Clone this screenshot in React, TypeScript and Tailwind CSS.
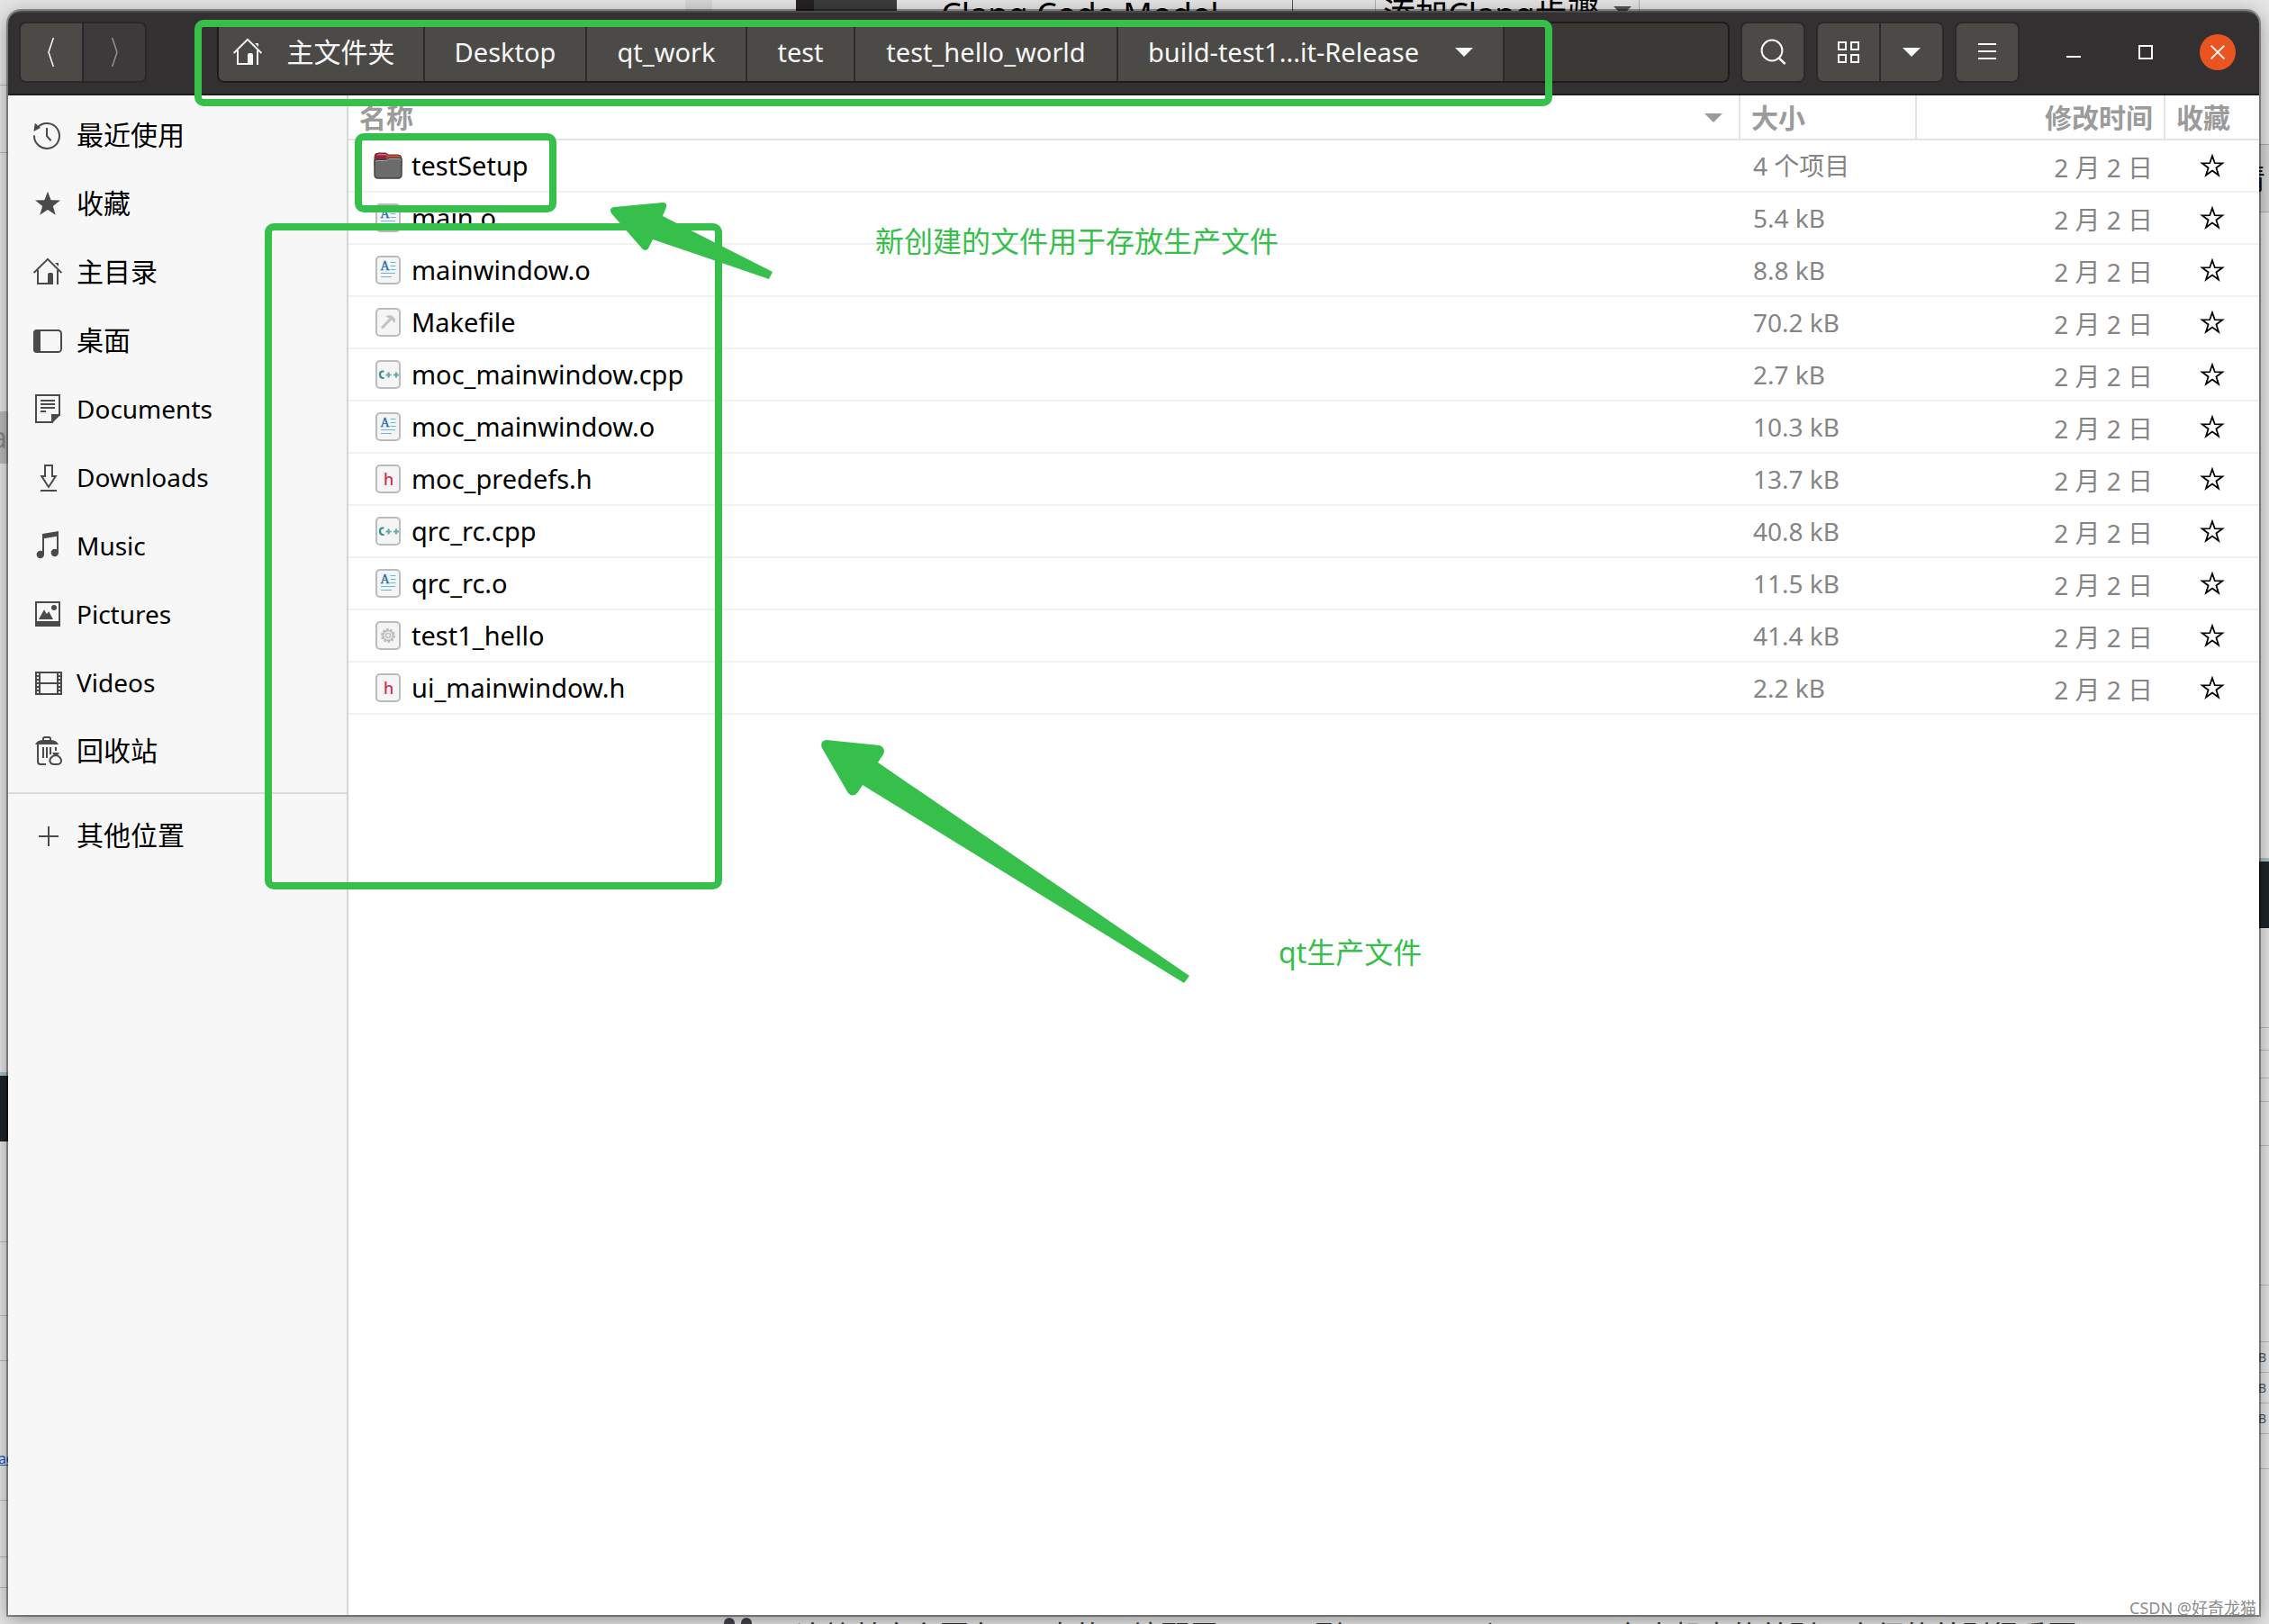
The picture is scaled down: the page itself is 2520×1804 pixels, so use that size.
import { ReactNode, useState } from 'react';

type FileKind = 'folder' | 'object' | 'make' | 'cpp' | 'header' | 'binary';

interface FileRow {
  name: string;
  kind: FileKind;
  size: string;
  modified: string;
}

const files: FileRow[] = [
  { name: 'testSetup', kind: 'folder', size: '4 个项目', modified: '2 月 2 日' },
  { name: 'main.o', kind: 'object', size: '5.4 kB', modified: '2 月 2 日' },
  { name: 'mainwindow.o', kind: 'object', size: '8.8 kB', modified: '2 月 2 日' },
  { name: 'Makefile', kind: 'make', size: '70.2 kB', modified: '2 月 2 日' },
  { name: 'moc_mainwindow.cpp', kind: 'cpp', size: '2.7 kB', modified: '2 月 2 日' },
  { name: 'moc_mainwindow.o', kind: 'object', size: '10.3 kB', modified: '2 月 2 日' },
  { name: 'moc_predefs.h', kind: 'header', size: '13.7 kB', modified: '2 月 2 日' },
  { name: 'qrc_rc.cpp', kind: 'cpp', size: '40.8 kB', modified: '2 月 2 日' },
  { name: 'qrc_rc.o', kind: 'object', size: '11.5 kB', modified: '2 月 2 日' },
  { name: 'test1_hello', kind: 'binary', size: '41.4 kB', modified: '2 月 2 日' },
  { name: 'ui_mainwindow.h', kind: 'header', size: '2.2 kB', modified: '2 月 2 日' },
];

/* 16px grid icons, drawn at 2x */
function Icon({ children }: { children: ReactNode }) {
  return (
    <svg viewBox="0 0 16 16" className="size-8 shrink-0" fill="none" stroke="currentColor" aria-hidden="true">
      {children}
    </svg>
  );
}

const HomeIcon = () => (
  <Icon>
    <path d="M.3 8.5 8 .9l7.7 7.6M2.5 7v7.5h6M13.5 7v8" />
    <path d="M8 15V9.5q0-1 1-1h1q1 0 1 1V15zM12 3h2v2z" fill="currentColor" stroke="none" />
  </Icon>
);

const places: { label: string; cjk?: boolean; icon: ReactNode }[] = [
  {
    label: '最近使用',
    cjk: true,
    icon: (
      <Icon>
        <path d="M.5 8.2A7 7 0 1 0 2.2 3.9" />
        <path d="M7.5 4v4.6l2.3 2.5" />
        <path d="M.9 1.4 4 4 .2 6z" fill="currentColor" stroke="none" />
      </Icon>
    ),
  },
  {
    label: '收藏',
    cjk: true,
    icon: (
      <Icon>
        <path d="m8 1.4 1.8 4.7 5.2.2-4.1 3.2 1.5 4.9L8 11.5l-4.4 2.9 1.5-4.9L1 6.3l5.2-.2z" fill="currentColor" stroke="none" />
      </Icon>
    ),
  },
  { label: '主目录', cjk: true, icon: <HomeIcon /> },
  {
    label: '桌面',
    cjk: true,
    icon: (
      <Icon>
        <rect x=".5" y="2.5" width="15" height="12" rx="1.8" />
        <path d="M2 2h2v13H2q-2 0-2-2V4q0-2 2-2z" fill="currentColor" stroke="none" />
      </Icon>
    ),
  },
  {
    label: 'Documents',
    icon: (
      <Icon>
        <path d="M11 15.5H1.5V.5h13V12M4 3.5h8M4 5.5h8M4 7.5h8M4 9.5h3" />
        <path d="M10 11h5v.5L10.5 16H10z" fill="currentColor" stroke="none" />
      </Icon>
    ),
  },
  {
    label: 'Downloads',
    icon: (
      <Icon>
        <path d="M6.5 1.5h4v6h1.9l-3.9 6-3.9-6h1.9zM4 15.5h9" />
      </Icon>
    ),
  },
  {
    label: 'Music',
    icon: (
      <Icon>
        <path d="M5.5 3v10M13.5 2v10" />
        <path d="M5 1.5 14 0v2.8L5 4.3z" fill="currentColor" stroke="none" />
        <circle cx="3.9" cy="13" r="2.1" fill="currentColor" stroke="none" />
        <circle cx="11.9" cy="12" r="2.1" fill="currentColor" stroke="none" />
      </Icon>
    ),
  },
  {
    label: 'Pictures',
    icon: (
      <Icon>
        <rect x="1.5" y="1.5" width="13" height="13" />
        <path d="M1 12h14v3H1zM3 11l3-5.4L7.4 8l1.2-1.4L11 11z" fill="currentColor" stroke="none" />
        <circle cx="11.5" cy="4.5" r="1.5" fill="currentColor" stroke="none" />
      </Icon>
    ),
  },
  {
    label: 'Videos',
    icon: (
      <Icon>
        <path d="M3 2.5h11M3 14.5h11M3 8.5h11M3.5 2v13M13.5 2v13" />
        <path d="M1.5 2v13M15.5 2v13" />
        <path d="M2.5 2v13M14.5 2v13" strokeDasharray="1 1" />
      </Icon>
    ),
  },
  {
    label: '回收站',
    cjk: true,
    icon: (
      <Icon>
        <path d="M2.5 4.5V14q0 1.5 1.5 1.5h3M5.5 6v6M7.5 6v6M9.5 6v4M12.5 6v2M5.500 2V1.200q0-.7.7-.7h2.600q.7 0 .7.7V2" />
        <path d="M1 4.5q1-2.3 4-2.5h5q3 .2 4 2.5zM10.5 9h4l-1.200 1.600h-1.600z" fill="currentColor" stroke="none" />
        <path d="M11.5 10.6q-2.500 1.400-2.300 3.200.4 1.700 2.300 1.700h1.500q2.200 0 2.500-1.700.1-1.900-2.200-3.200z" />
      </Icon>
    ),
  },
];

function FileIcon({ kind }: { kind: FileKind }) {
  if (kind === 'folder') {
    return (
      <svg viewBox="0 0 32 32" className="size-8 shrink-0" aria-hidden="true">
        <path d="M1 6q0-4 4-4h8q2 0 3 2h11q4 0 4 4v8H1z" fill="#d9492c" stroke="#4a3a3a" strokeWidth="1" />
        <path d="M1 6q0-4 4-4h8q2 0 2 2l-2 6H1z" fill="#8e2546" />
        <path d="M5 3h8q2 0 2 1.5H3Q4 3 5 3z" fill="#d8686c" />
        <path d="M1 11q0-1.5 2-1.5h9q2 0 3-1t3-1h10q3 0 3 3V26q0 4-4 4H5q-4 0-4-4z" fill="#6b6b6b" stroke="#434343" strokeWidth="1.5" />
        <path d="M2 11.5q0-1 1.5-1h9q2 0 3-1t2.500-1h10q2 0 2 2" fill="none" stroke="#a5a5a5" />
      </svg>
    );
  }
  return (
    <svg viewBox="0 0 32 32" className="size-8 shrink-0" aria-hidden="true">
      <rect x="3" y="1" width="26" height="30" rx="4" fill="#f5f5f5" stroke="#bcbcbc" strokeWidth="2" />
      {kind === 'object' && (
        <>
          <text x="7.5" y="16" fontSize="14" fontFamily="Liberation Serif, serif" fill="#2a6fa8" stroke="#2a6fa8" strokeWidth=".4">A</text>
          <path d="M18.500 7.500h6M18.500 11.500h6M18.500 15.500h6M8 19.500h16M8 23.500h12" stroke="#66b5e3" strokeWidth="1.2" />
        </>
      )}
      {kind === 'make' && (
        <>
          <path d="M9 22.500 20 11" stroke="#c2c2c2" strokeWidth="3" />
          <path d="M13 9.500q5-3 8.500 0l3 3.500-1.500 4-3-3.500-3-2z" fill="#c2c2c2" />
        </>
      )}
      {kind === 'cpp' && (
        <>
          <path d="M11.500 12.500H10q-3 0-3 3.500t3 4h1.500" fill="none" stroke="#2f9294" strokeWidth="2.200" />
          <path d="M13.500 16.500h6M16.500 13.500v6M22 16.500h6M25 13.500v6" stroke="#62adad" strokeWidth="2.200" />
        </>
      )}
      {kind === 'header' && (
        <text x="11" y="23" fontSize="18" fontFamily="Noto Sans, sans-serif" fontWeight="500" fill="#d42a4d">h</text>
      )}
      {kind === 'binary' && (
        <g fill="none" stroke="#bdbdbd">
          <circle cx="16" cy="16" r="7" strokeWidth="2" strokeDasharray="2.700 1.700" />
          <circle cx="16" cy="16" r="5.500" strokeWidth="2" />
          <circle cx="16" cy="16" r="2.500" strokeWidth="1.500" />
        </g>
      )}
    </svg>
  );
}

function CaretDown({ className = '' }: { className?: string }) {
  return (
    <svg viewBox="0 0 20 10" className={`h-[10px] w-5 shrink-0 ${className}`} fill="currentColor" aria-hidden="true">
      <path d="M0 0h20L10 10z" />
    </svg>
  );
}

const crumb = 'flex h-16 items-center justify-center border-r-2 border-[#2b2a29] bg-[#4b4a47] hover:bg-[#555451]';
const toolButton = 'flex h-16 items-center justify-center bg-[#4b4a47] shadow-[0_0_0_2px_#2c292a] hover:bg-[#555451]';

function HeaderBar() {
  return (
    <header className="flex h-[94px] shrink-0 items-center rounded-t-[14px] border-t-2 border-b-2 border-t-[#4b494a] border-b-[#1f1c1d] bg-[#333031] pr-[6px] pb-[2px] pl-[14px] text-[#f7f7f7]">
      <div className="flex">
        <button aria-label="后退" className={`${toolButton} w-[68px] rounded-l-[6px]`}>
          <Icon><path d="M10 2 6 8l4 6" transform="translate(2 -4) scale(.75 1.5)" strokeWidth=".9" /></Icon>
        </button>
        <button aria-label="前进" className="ml-[2px] flex h-16 w-[68px] items-center justify-center rounded-r-[6px] bg-[#3c3a3a] text-[#929191] shadow-[0_0_0_2px_#2a2728]">
          <Icon><path d="m6 2 4 6-4 6" transform="translate(2 -4) scale(.75 1.5)" strokeWidth=".9" /></Icon>
        </button>
      </div>

      <nav aria-label="路径" className="ml-20 flex h-[68px] min-w-0 flex-1 items-center overflow-hidden rounded-[8px] border-2 border-[#1f1c1d] bg-[#3a3936]">
        <button className={`${crumb} w-[229px] gap-7 pr-4 text-[30px]`}>
          <HomeIcon />
          主文件夹
        </button>
        <button className={`${crumb} w-[180px]`}>Desktop</button>
        <button className={`${crumb} w-[178px]`}>qt_work</button>
        <button className={`${crumb} w-[120px]`}>test</button>
        <button className={`${crumb} w-[292px]`}>test_hello_world</button>
        <button className={`${crumb} w-[429px] gap-10`}>
          build-test1...it-Release
          <CaretDown />
        </button>
      </nav>

      <button aria-label="搜索" className={`${toolButton} ml-[14px] w-[68px] rounded-[6px]`}>
        <Icon>
          <circle cx="7.500" cy="7" r="5.700" />
          <path d="m11.300 11.200 3.500 3.300" strokeWidth="1.300" />
        </Icon>
      </button>
      <div className="ml-4 flex gap-[2px]">
        <button aria-label="图标视图" className={`${toolButton} w-[68px] rounded-l-[6px]`}>
          <Icon>
            <path d="M2.500 2.500h4v4h-4zM9.500 2.500h4v4h-4zM2.500 9.500h4v4h-4zM9.500 9.500h4v4h-4z" />
          </Icon>
        </button>
        <button aria-label="视图选项" className={`${toolButton} w-[68px] rounded-r-[6px]`}>
          <CaretDown />
        </button>
      </div>
      <button aria-label="菜单" className={`${toolButton} ml-4 w-[68px] rounded-[6px]`}>
        <Icon>
          <path d="M3 3.500h10M3 7.500h10M3 11.500h10" />
        </Icon>
      </button>

      <button aria-label="最小化" className="ml-[22px] flex h-16 w-20 items-center justify-center">
        <Icon><path d="M4 10.500h8" /></Icon>
      </button>
      <button aria-label="最大化" className="flex h-16 w-20 items-center justify-center">
        <Icon><path d="M4.500 4.500h7v7h-7z" /></Icon>
      </button>
      <button aria-label="关闭" className="flex h-16 w-20 items-center justify-center">
        <span className="flex size-10 items-center justify-center rounded-full bg-[#e95420]">
          <Icon><path d="m4.300 4.300 7.400 7.400M11.700 4.300l-7.400 7.400" /></Icon>
        </span>
      </button>
    </header>
  );
}

function Sidebar() {
  return (
    <aside className="w-[378px] shrink-0 border-r-2 border-[#d5d5d5] bg-[#f7f7f7] pt-[6px] text-black">
      <ul>
        {places.map((place) => (
          <li key={place.label}>
            <a
              href="#"
              className={`flex h-[76px] items-center gap-4 pl-7 hover:bg-[#ececec] ${place.cjk ? 'text-[30px]' : 'text-[28px]'}`}
            >
              <span className="text-[#4a4a4a]">{place.icon}</span>
              {place.label}
            </a>
          </li>
        ))}
      </ul>
      <hr className="my-2 border-t-2 border-[#dcdcdc]" />
      <a href="#" className="flex h-[76px] items-center gap-4 pl-7 text-[30px] hover:bg-[#ececec]">
        <span className="text-[#4a4a4a]">
          <Icon><path d="M3 8.500h11M8.500 3v11" /></Icon>
        </span>
        其他位置
      </a>
    </aside>
  );
}

function FileTable() {
  const [starred, setStarred] = useState<string[]>([]);

  const toggleStar = (name: string) => {
    setStarred(starred.includes(name) ? starred.filter((n) => n !== name) : [...starred, name]);
  };

  const th = 'h-[50px] border-b-2 border-[#e4e4e4] p-0 pt-[2px] text-[30px] font-bold';
  const td = 'h-[58px] border-b-2 border-[#f1f1f1] p-0';

  return (
    <main className="min-w-0 flex-1 bg-white">
      <table className="w-full table-fixed border-separate border-spacing-0 text-[#858585]">
        <thead className="text-[#9b9b9b]">
          <tr>
            <th className={`${th} border-r-2 pl-3 text-left`}>
              <div className="flex items-center justify-between pr-[18px]">
                名称
                <CaretDown />
              </div>
            </th>
            <th className={`${th} w-[196px] border-r-2 pl-3 text-left`}>大小</th>
            <th className={`${th} w-[276px] border-r-2 pr-3 text-right`}>修改时间</th>
            <th className={`${th} w-[104px] pl-3 text-left`}>收藏</th>
          </tr>
        </thead>
        <tbody>
          {files.map((file) => (
            <tr key={file.name} className="hover:bg-gray-50">
              <td className={`${td} pl-7 text-black`}>
                <div className="flex items-center gap-[10px]">
                  <FileIcon kind={file.kind} />
                  {file.name}
                </div>
              </td>
              <td className={`${td} pl-[14px] text-[28px]`}>{file.size}</td>
              <td className={`${td} pt-1 pr-[14px] text-right text-[28px]`}>{file.modified}</td>
              <td className={`${td} text-black`}>
                <button aria-label={`收藏 ${file.name}`} className="mx-auto block" onClick={() => toggleStar(file.name)}>
                  <Icon>
                    <path
                      d="m8 2.600 1.400 4 4.200.1-3.400 2.500 1.300 4.100L8 10.800l-3.500 2.500 1.300-4.100-3.400-2.500 4.200-.1z"
                      strokeWidth=".9"
                      fill={starred.includes(file.name) ? 'currentColor' : 'none'}
                    />
                  </Icon>
                </button>
              </td>
            </tr>
          ))}
        </tbody>
      </table>
    </main>
  );
}

const leftRule = 'absolute left-0 h-px w-3 bg-[#b5b5bb]';
const rightRule = 'absolute right-0 h-px w-3 bg-[#b5b5bb]';

/* Slivers of the page that show around the window's edges */
function Backdrop() {
  return (
    <div className="absolute inset-0 overflow-hidden bg-[#e4e4e4]" aria-hidden="true">
      <div className="absolute top-0 left-[761px] h-3 w-[30px] bg-[#d6d6d6]" />
      <div className="absolute top-0 left-[884px] h-3 w-5 bg-[#262124]" />
      <div className="absolute top-0 left-[904px] h-3 w-[92px] bg-[#3a3c3d]" />
      <div className="absolute -top-1 left-[1045px] text-[36px] leading-10 whitespace-nowrap text-black">Clang Code Model</div>
      <div className="absolute top-0 left-[1435px] h-3 w-px bg-[#555]" />
      <div className="absolute -top-1 left-[1527px] flex w-[294px] items-center justify-between border-x border-[#b0b0b0] px-2 text-[36px] leading-10 whitespace-nowrap text-black">
        添加Clang步骤
        <CaretDown className="mb-2 text-[#555]" />
      </div>

      <div className={`${leftRule} top-[94px]`} />
      <div className={`${leftRule} top-[169px]`} />
      <div className="absolute top-[457px] left-0 h-[58px] w-3 bg-[#b9b9b9]" />
      <div className="absolute top-[470px] -left-[10px] text-[32px] leading-8 text-[#888]">a</div>
      <div className="absolute top-[1191px] left-0 h-[77px] w-3 border-t-4 border-[#a3bfc2] bg-[#1e2326]" />
      <div className={`${leftRule} top-[1379px]`} />
      <div className={`${leftRule} top-[1461px]`} />
      <div className={`${leftRule} top-[1511px]`} />
      <div className="absolute top-[1610px] -left-3 text-base leading-5 text-[#1459c7] underline">nac</div>
      <div className={`${leftRule} top-[1666px]`} />
      <div className={`${leftRule} top-[1729px]`} />
      <div className={`${leftRule} top-[1763px]`} />

      <div className="absolute top-[160px] right-0 h-[76px] w-3 border-y border-[#a8a8a8] bg-[#d5d5d5]" />
      <div className="absolute top-[178px] right-1 text-[32px] leading-10 text-black">清</div>
      <div className="absolute top-[953px] right-0 h-[78px] w-3 border-t-4 border-[#a3bfc2] bg-[#1e2326]" />
      <div className={`${rightRule} top-[1141px]`} />
      <div className={`${rightRule} top-[1166px]`} />
      <div className={`${rightRule} top-[1197px]`} />
      <div className={`${rightRule} top-[1223px]`} />
      <div className={`${rightRule} top-[1272px]`} />
      <div className={`${rightRule} top-[1427px]`} />
      <div className="absolute top-[1490px] right-0 w-4 divide-y divide-[#b5b5bb] border-y border-[#b5b5bb] pl-1 text-sm leading-[33px] text-[#49606e]">
        <div>B</div>
        <div>B</div>
        <div>B</div>
      </div>
      <div className={`${rightRule} top-[1631px]`} />

      <div className="absolute bottom-0 left-[804px] flex h-[7px] w-[31px] justify-between">
        <span className="w-3 rounded-t-full bg-[#42414d]" />
        <span className="w-3 rounded-t-full bg-[#42414d]" />
      </div>
      <div className="absolute -bottom-[33px] left-[884px] text-[32px] leading-10 whitespace-nowrap text-[#333]">
        这块其实主要在 Qt 中的环境配置下面，理解 Release 与 Debug 在本机中的差别，方便的差别很重要
      </div>
    </div>
  );
}

function Annotations() {
  const box = 'absolute rounded-[10px] border-8 border-[#37bf4b]';

  return (
    <div className="pointer-events-none absolute inset-0 overflow-hidden text-[32px] leading-10 text-[#37bf4b]">
      <div className={`${box} top-[22px] left-[216px] h-24 w-[1508px]`} />
      <div className={`${box} top-[148px] left-[394px] h-[88px] w-[224px]`} />
      <div className={`${box} top-[248px] left-[294px] h-[740px] w-[508px]`} />

      <svg viewBox="0 0 190 96" className="absolute top-[220px] left-[674px] h-24 w-[190px]" fill="#37bf4b" aria-hidden="true">
        <path d="M8 10 62 5q5 0 4 5l-4 10 122 62-4 8L51 46l-5 10q-3 4-7 0L5 17q-3-6 3-7z" />
      </svg>
      <svg viewBox="0 0 450 310" className="absolute top-[800px] left-[890px] h-[310px] w-[450px]" fill="#37bf4b" aria-hidden="true">
        <path d="m28 22 59 6q5 2 5 7l-1 3-6 9 346 237-6 8L68 72l-6 9q-5 5-10 0L23 31q-3-8 5-9z" />
      </svg>

      <p className="absolute top-[248px] left-[972px] whitespace-nowrap">新创建的文件用于存放生产文件</p>
      <p className="absolute top-[1038px] left-[1420px] whitespace-nowrap">qt生产文件</p>
      <p className="absolute right-[14px] bottom-[6px] text-lg leading-6 whitespace-nowrap text-[#8c8c8c]">CSDN @好奇龙猫</p>
    </div>
  );
}

export default function App() {
  return (
    <div
      lang="zh-CN"
      className="relative flex h-screen flex-col overflow-hidden pt-3 pr-[11px] pb-[10px] pl-[9px] font-['Noto_Sans','Noto_Sans_CJK_SC',sans-serif] text-[29px] leading-9"
    >
      <Backdrop />
      <div className="relative flex min-h-0 flex-1 flex-col rounded-t-[14px] shadow-[0_0_0_2px_rgba(0,0,0,0.35),0_4px_20px_rgba(0,0,0,0.4)]">
        <HeaderBar />
        <div className="flex min-h-0 flex-1">
          <Sidebar />
          <FileTable />
        </div>
      </div>
      <Annotations />
    </div>
  );
}
